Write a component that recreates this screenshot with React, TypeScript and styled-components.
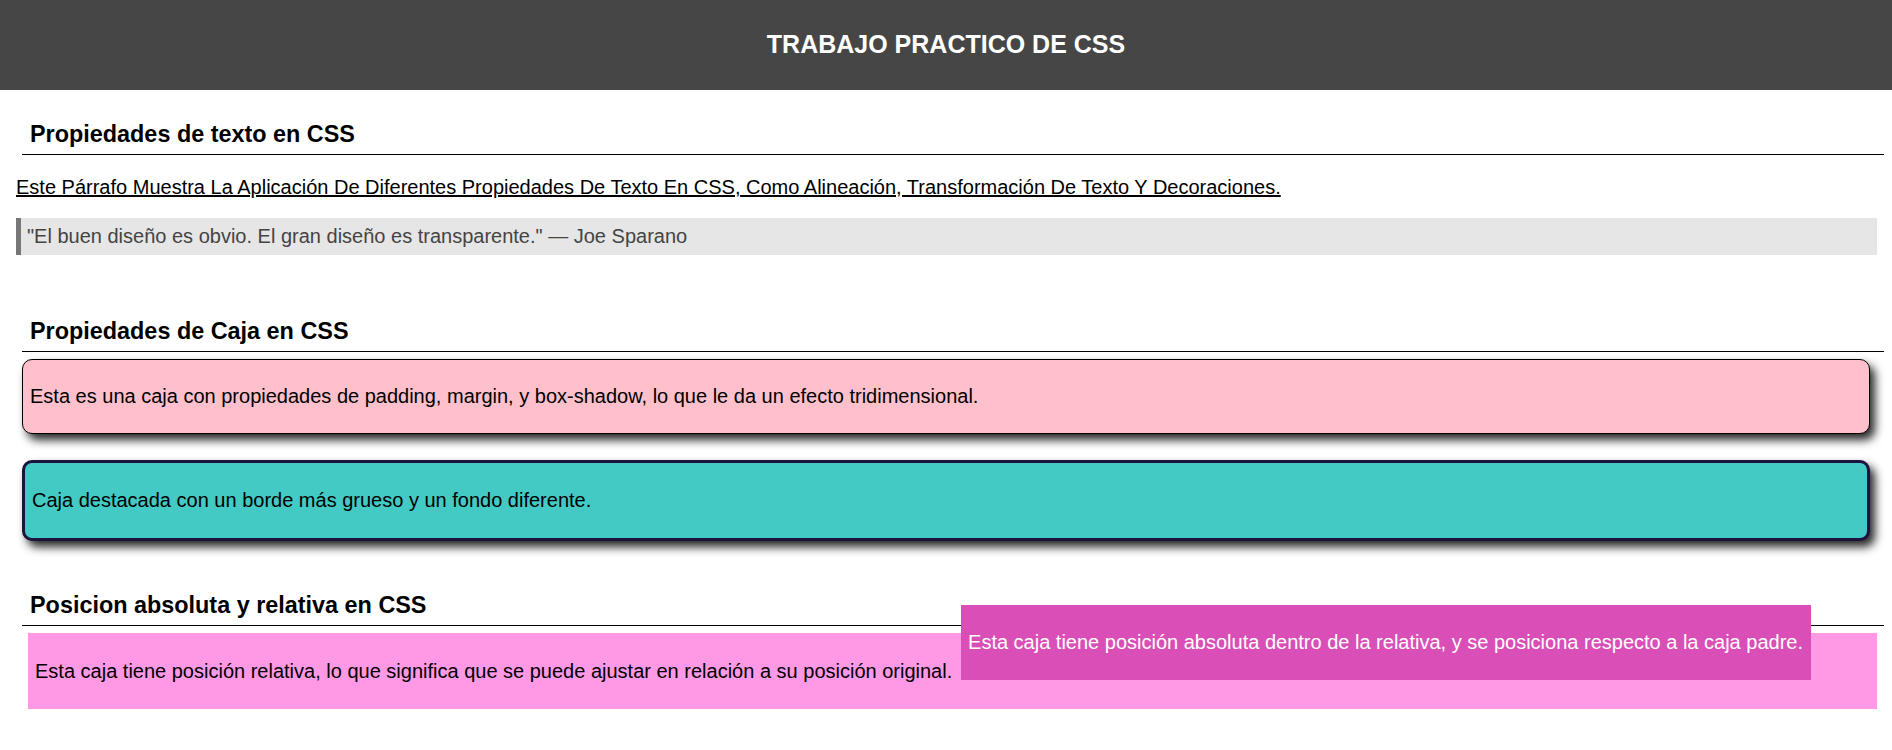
import React from 'react';
import styled, { createGlobalStyle } from 'styled-components';

const GlobalStyle = createGlobalStyle`
  body {
    margin: 0;
    background: #fff;
    font-family: 'Liberation Sans', Arial, sans-serif;
    font-size: 20px;
    line-height: 23px;
    color: #000;
  }
`;

const Header = styled.header`
  height: 90px;
  background: #464646;
  color: #fff;
  display: flex;
  align-items: center;
  justify-content: center;
`;

const Title = styled.h1`
  margin: 0 0 2px;
  font-size: 25px;
  line-height: 29px;
  font-weight: bold;
`;

const Main = styled.main`
  padding: 0 15px 40px 16px;
`;

const Section = styled.section<{ top: number }>`
  margin-top: ${(p) => p.top}px;
`;

const SectionTitle = styled.h2`
  margin: 0 -7px 0 6px;
  padding: 0 0 6px 8px;
  font-size: 23.4px;
  font-weight: bold;
  line-height: 27px;
  border-bottom: 1px solid #000;
`;

const TextParagraph = styled.p`
  margin: 21px 0 0;
  text-transform: capitalize;
  text-decoration: underline;
`;

const Quote = styled.blockquote`
  margin: 19px 0 0;
  padding: 7px 10px 7px 6px;
  background: #e6e6e6;
  border-left: 5px solid #777;
  color: #444;
`;

const Box = styled.div<{ variant: 'normal' | 'highlight' }>`
  margin: ${(p) => (p.variant === 'normal' ? '7px 7px 0 6px' : '26px 7px 0 6px')};
  padding: ${(p) => (p.variant === 'normal' ? '25px 7px' : '26px 7px')};
  border: ${(p) => (p.variant === 'normal' ? '1px solid #000' : '3px solid #1d1340')};
  border-radius: 10px;
  background: ${(p) => (p.variant === 'normal' ? '#ffc0cb' : '#43cac4')};
  box-shadow: 5px 6px 10px rgba(0, 0, 0, 0.85);
`;

const RelativeBox = styled.div`
  position: relative;
  margin: 7px 0 0 12px;
  padding: 27px 7px 26px;
  background: #ff99e6;
`;

const AbsoluteBox = styled.div`
  position: absolute;
  top: -28px;
  right: 66px;
  padding: 26px 8px 26px 7px;
  background: #d94fb7;
  color: #fff;
  white-space: nowrap;
`;

export default function App() {
  return (
    <>
      <GlobalStyle />
      <Header>
        <Title>TRABAJO PRACTICO DE CSS</Title>
      </Header>
      <Main>
        <Section top={31}>
          <SectionTitle>Propiedades de texto en CSS</SectionTitle>
          <TextParagraph>
            Este párrafo muestra la aplicación de diferentes propiedades de texto en CSS, como
            alineación, transformación de texto y decoraciones.
          </TextParagraph>
          <Quote>"El buen diseño es obvio. El gran diseño es transparente." — Joe Sparano</Quote>
        </Section>
        <Section top={63}>
          <SectionTitle>Propiedades de Caja en CSS</SectionTitle>
          <Box variant="normal">
            Esta es una caja con propiedades de padding, margin, y box-shadow, lo que le da un
            efecto tridimensional.
          </Box>
          <Box variant="highlight">
            Caja destacada con un borde más grueso y un fondo diferente.
          </Box>
        </Section>
        <Section top={51}>
          <SectionTitle>Posicion absoluta y relativa en CSS</SectionTitle>
          <RelativeBox>
            Esta caja tiene posición relativa, lo que significa que se puede ajustar en relación a
            su posición original.
            <AbsoluteBox>
              Esta caja tiene posición absoluta dentro de la relativa, y se posiciona respecto a
              la caja padre.
            </AbsoluteBox>
          </RelativeBox>
        </Section>
      </Main>
    </>
  );
}
